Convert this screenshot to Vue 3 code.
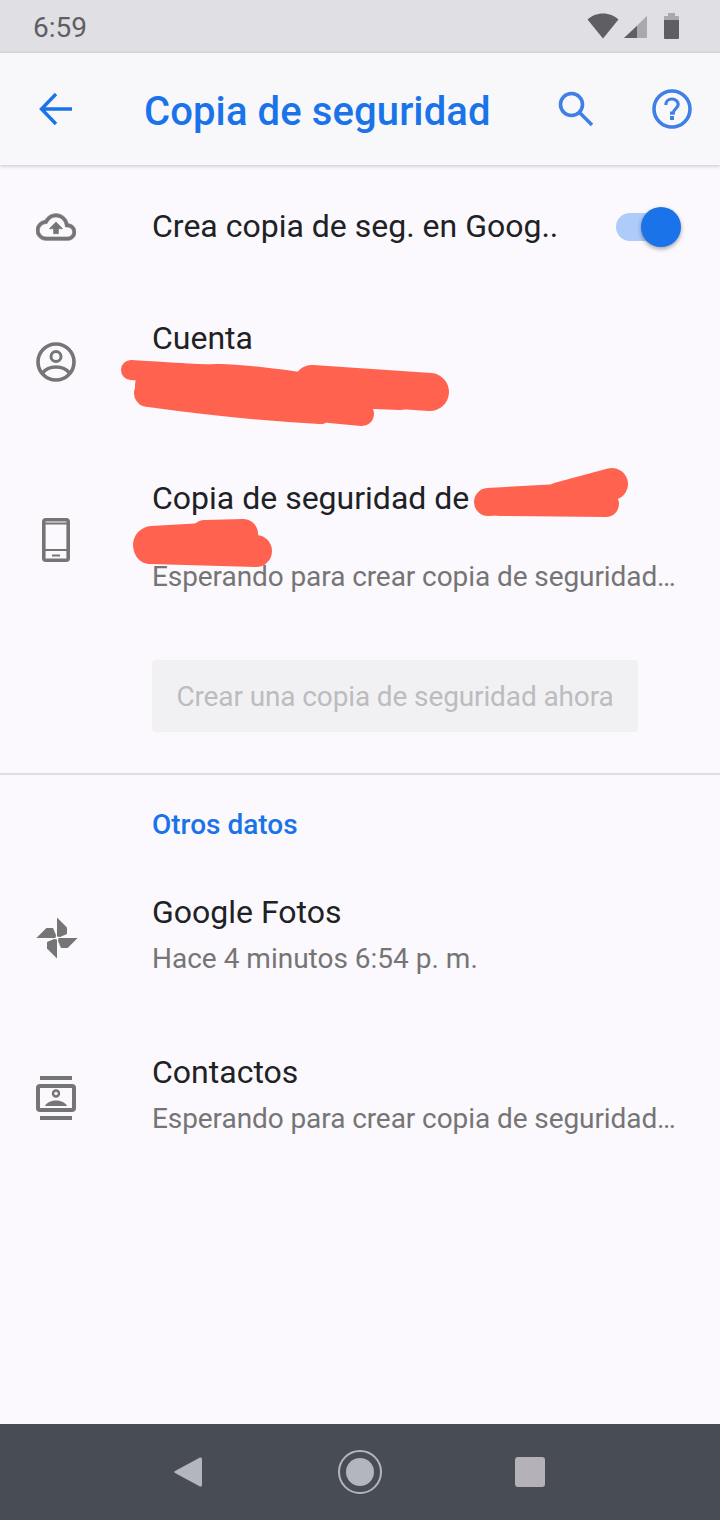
<script setup>
const otros = [
  { title: 'Google Fotos', sub: 'Hace 4 minutos 6:54 p. m.', icon: 'fotos' },
  { title: 'Contactos', sub: 'Esperando para crear copia de seguridad…', icon: 'contactos', largo: true }
]
const blades = [0, 90, 180, 270]
</script>

<template>
  <div class="page">
    <div class="status">
      <span class="hora">6:59</span>
      <div class="status__icons">
        <svg width="32" height="26" viewBox="0 0 32 26"><path d="M16 25.5 0.5 6.5C4.5 2.8 10 .5 16 .5s11.500 2.300 15.500 6z" fill="#5f5e62"/></svg>
        <svg class="signal" width="23" height="23" viewBox="0 0 23 23"><path d="M23 0v22H0z" fill="#a9a8ac"/><path d="M13 10v12H0z" fill="#5f5e62"/></svg>
        <svg class="bateria" width="15" height="26" viewBox="0 0 15 26"><path d="M4 0h7v3h3a1 1 0 0 1 1 1v3H0V4a1 1 0 0 1 1-1h3z" fill="#a9a8ac"/><path d="M0 7h15v18a1 1 0 0 1-1 1H1a1 1 0 0 1-1-1z" fill="#5f5e62"/></svg>
      </div>
    </div>

    <header class="toolbar">
      <svg class="back" width="34" height="34" viewBox="0 0 34 34" fill="none" stroke="#1a73e8" stroke-width="3.400"><path d="M33 17H3M17 2 2.500 17 17 32"/></svg>
      <h1>Copia de seguridad</h1>
      <svg class="search" width="36" height="36" viewBox="0 0 36 36" fill="none" stroke="#3f7fe6" stroke-width="3.600"><circle cx="13.500" cy="13.500" r="11"/><path d="M21.500 21.500 34 34"/></svg>
      <svg class="help" width="40" height="40" viewBox="0 0 40 40"><circle cx="20" cy="20" r="18" fill="none" stroke="#3f7fe6" stroke-width="3.600"/><path d="M13.800 16c0-3.500 2.800-6 6.200-6s6.200 2.500 6.200 5.600c0 3.900-5 4.300-5 8.600h-3.200" fill="none" stroke="#3f7fe6" stroke-width="3.200"/><rect x="18" y="27" width="4" height="4" fill="#3f7fe6"/></svg>
    </header>

    <main class="content">
      <div class="row row--backup">
        <div class="row__icon">
          <svg width="40" height="40" viewBox="0 0 24 24" fill="#757575" stroke="#757575" stroke-width=".4"><path d="M19.350 10.040C18.670 6.590 15.640 4 12 4 9.110 4 6.600 5.640 5.350 8.040 2.340 8.360 0 10.910 0 14c0 3.310 2.690 6 6 6h13c2.760 0 5-2.240 5-5 0-2.640-2.050-4.780-4.650-4.960zM19 18H6c-2.210 0-4-1.790-4-4 0-2.050 1.530-3.760 3.560-3.970l1.070-.11.5-.95C8.080 7.140 9.940 6 12 6c2.620 0 4.880 1.860 5.390 4.430l.3 1.500 1.530.11c1.560.1 2.780 1.410 2.780 2.960 0 1.650-1.350 3-3 3zM8 13h2.550v3h2.900v-3H16l-4-4z"/></svg>
        </div>
        <div class="row__title row__title--one">Crea copia de seg. en Goog..</div>
        <div class="toggle"><span class="toggle__thumb"></span></div>
      </div>

      <div class="row row--cuenta">
        <div class="row__icon">
          <svg width="40" height="40" viewBox="0 0 40 40" fill="none" stroke="#757575"><circle cx="20" cy="20" r="18" stroke-width="3.600"/><circle cx="20" cy="14.500" r="5" stroke-width="3"/><path d="M6.500 31C10 26.500 15 25 20 25s10 1.500 13.500 6" stroke-width="3.600"/></svg>
        </div>
        <div class="row__text">
          <div class="row__title">Cuenta</div>
        </div>
      </div>

      <div class="row row--device">
        <div class="row__icon">
          <svg class="telefono" width="28" height="44" viewBox="0 0 28 44" fill="none"><rect x="1.800" y="1.800" width="24.400" height="40.400" rx="2" stroke="#757575" stroke-width="3.600"/><path d="M3 5.500h22M3 32h22" stroke="#757575" stroke-width="2"/><path d="M10 37.500h8" stroke="#757575" stroke-width="2"/></svg>
        </div>
        <div class="row__text">
          <div class="row__title">Copia de seguridad de</div>
          <div class="row__oculto"></div>
          <div class="row__sub row__sub--largo">Esperando para crear copia de seguridad…</div>
        </div>
      </div>

      <div class="accion">
        <button class="accion__btn" disabled>Crear una copia de seguridad ahora</button>
      </div>

      <div class="divider"></div>

      <h2 class="seccion">Otros datos</h2>

      <div v-for="item in otros" :key="item.title" class="row row--dato">
        <div class="row__icon">
          <svg v-if="item.icon === 'fotos'" width="42" height="42" viewBox="-21 -21 42 42" fill="#757575">
            <polygon v-for="a in blades" :key="a" points="0,-20.600 10,-10.600 10,-4 3,-1 0,-1.500" :transform="`rotate(${a})`"/>
          </svg>
          <svg v-else width="40" height="44" viewBox="0 0 40 44" fill="none"><path d="M4 2h32M4 42h32" stroke="#757575" stroke-width="4"/><rect x="2" y="10" width="36" height="24" rx="2" stroke="#757575" stroke-width="4"/><circle cx="20" cy="17.500" r="3" stroke="#757575" stroke-width="2.400"/><path d="M9 30c2-4 7-5.500 11-5.500S29 26 31 30z" fill="#757575"/></svg>
        </div>
        <div class="row__text">
          <div class="row__title">{{ item.title }}</div>
          <div class="row__sub" :class="{ 'row__sub--largo': item.largo }">{{ item.sub }}</div>
        </div>
      </div>
    </main>

    <nav class="navbar">
      <svg width="28" height="32" viewBox="0 0 28 32"><path d="M26 1.500a1.500 1.500 0 0 1 2 1.500v26a1.500 1.500 0 0 1-2 1.500L1 17a1.200 1.200 0 0 1 0-2z" fill="#b4b6bd"/></svg>
      <div class="home"><span></span></div>
      <span class="recent"></span>
    </nav>

    <!-- tachones encima de los datos -->
    <svg class="tachon" width="720" height="1520" viewBox="0 0 720 1520" fill="none" stroke="#ff6350" stroke-linecap="round" stroke-linejoin="round">
      <path d="M131 370 C170 372 200 375 217 374 S270 378 300 382" stroke-width="20"/>
      <path d="M148 393 C220 403 280 408 320 410" stroke-width="28"/>
      <path d="M150 385 L400 395" stroke-width="30"/>
      <path d="M312 384 L430 392" stroke-width="38"/>
      <path d="M330 411 L362 414" stroke-width="24"/>
      <path d="M488 502 L560 498" stroke-width="28"/>
      <path d="M560 498 L612 484" stroke-width="32"/>
      <path d="M500 503 L606 504" stroke-width="26"/>
      <path d="M152 545 L240 540" stroke-width="38"/>
      <path d="M205 535 L243 534" stroke-width="30"/>
      <path d="M150 548 L256 551" stroke-width="32"/>
    </svg>
  </div>
</template>

<style>
html, body {
  margin: 0;
  background: #fbf9fd;
}
</style>

<style scoped>
.page {
  position: relative;
  width: 720px;
  height: 1520px;
  display: flex;
  flex-direction: column;
  background: #fbf9fd;
  font-family: Roboto, "Liberation Sans", sans-serif;
  overflow: hidden;
}

.status {
  height: 53px;
  flex: none;
  display: flex;
  align-items: center;
  justify-content: space-between;
  padding: 0 41px 0 33px;
  background: #e0dfe3;
  box-sizing: border-box;
}
.hora {
  font-size: 28px;
  color: #5f5e62;
  padding-top: 2px;
}
.status__icons {
  display: flex;
  align-items: flex-start;
  padding-bottom: 2px;
}
.signal {
  margin: 3px 0 0 5px;
}
.bateria {
  margin-left: 17px;
}

.toolbar {
  height: 112px;
  flex: none;
  display: flex;
  align-items: center;
  background: #f8f8fb;
  box-shadow: 0 1px 4px rgba(0, 0, 0, 0.22);
  position: relative;
  z-index: 1;
}
.back {
  margin-left: 39px;
}
.toolbar h1 {
  margin: 4px 0 0 71px;
  width: 414px;
  font-size: 40px;
  font-weight: 500;
  letter-spacing: 0.1px;
  color: #1a73e8;
}
.help {
  margin-left: 58px;
}

.content {
  flex: 1;
}
.row {
  display: flex;
  align-items: center;
}
.row--backup {
  height: 117px;
  padding-top: 6px;
  box-sizing: border-box;
}
.row--cuenta {
  height: 160px;
}
.row--cuenta .row__text {
  align-self: flex-start;
  padding-top: 33px;
}
.row--device {
  height: 195px;
}
.row--device .row__text {
  align-self: flex-start;
  padding-top: 33px;
}
.row--dato {
  height: 160px;
}
.row--dato .row__icon {
  padding-top: 5px;
}
.row--dato .row__title {
  margin-bottom: 1px;
}
.row__icon {
  width: 152px;
  flex: none;
  box-sizing: border-box;
  padding-left: 36px;
  display: flex;
}
.telefono {
  margin-left: 6px;
}
.row__title {
  font-size: 32px;
  line-height: 46px;
  color: #202124;
}
.row__title--one {
  flex: 1;
  margin-bottom: 2px;
}
.row__oculto {
  height: 33px;
}
.row__sub {
  font-size: 28px;
  line-height: 46px;
  color: #757575;
}
.row__sub--largo {
  letter-spacing: -0.08px;
}

.toggle {
  position: relative;
  width: 54px;
  height: 28px;
  margin-right: 50px;
  border-radius: 14px;
  background: #aecbfa;
}
.toggle__thumb {
  position: absolute;
  top: -6px;
  right: -11px;
  width: 40px;
  height: 40px;
  border-radius: 50%;
  background: #1a73e8;
  box-shadow: 0 2px 4px rgba(0, 0, 0, 0.35);
}

.accion {
  padding: 23px 0 0 152px;
  height: 113px;
}
.accion__btn {
  display: block;
  width: 486px;
  height: 72px;
  padding: 0;
  border: none;
  border-radius: 4px;
  background: #f1f1f3;
  color: #bcbcbf;
  font-family: inherit;
  font-size: 28px;
  letter-spacing: -0.12px;
}

.divider {
  height: 2px;
  background: #dfdfe1;
}
.seccion {
  margin: 0;
  height: 80px;
  padding: 33px 0 0 152px;
  box-sizing: border-box;
  font-size: 28px;
  line-height: 34px;
  font-weight: 500;
  color: #1a73e8;
}

.navbar {
  height: 96px;
  flex: none;
  display: flex;
  align-items: center;
  background: #484c54;
  padding-left: 174px;
  box-sizing: border-box;
}
.home {
  width: 44px;
  height: 44px;
  margin-left: 136px;
  box-sizing: border-box;
  border: 2px solid #b4b6bd;
  border-radius: 50%;
  display: flex;
  align-items: center;
  justify-content: center;
}
.home span {
  width: 28px;
  height: 28px;
  border-radius: 50%;
  background: #b4b6bd;
}
.recent {
  width: 30px;
  height: 30px;
  margin-left: 133px;
  border-radius: 3px;
  background: #b4b2b8;
}

.tachon {
  position: absolute;
  top: 0;
  left: 0;
  z-index: 2;
  pointer-events: none;
}
</style>
